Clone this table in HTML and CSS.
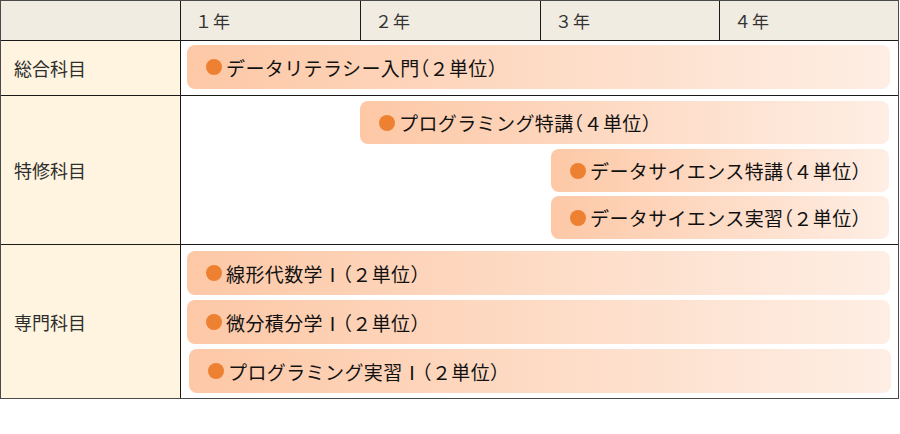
FILE: index.html
```html
<!DOCTYPE html>
<html lang="ja">
<head>
<meta charset="utf-8">
<title>カリキュラム</title>
<link rel="stylesheet" href="styles.css">
</head>
<body>
<div class="table">
  <div class="row head">
    <div class="label"></div>
    <div class="years">
      <div class="year">１年</div>
      <div class="year">２年</div>
      <div class="year">３年</div>
      <div class="year">４年</div>
    </div>
  </div>
  <div class="row r1">
    <div class="label">総合科目</div>
    <div class="courses">
      <div class="bar y1"><span class="dot"></span>データリテラシー入門<span class="unit">（２単位）</span></div>
    </div>
  </div>
  <div class="row r2">
    <div class="label">特修科目</div>
    <div class="courses">
      <div class="bar y2"><span class="dot"></span>プログラミング特講<span class="unit">（４単位）</span></div>
      <div class="bar y3"><span class="dot"></span>データサイエンス特講<span class="unit">（４単位）</span></div>
      <div class="bar y3"><span class="dot"></span>データサイエンス実習<span class="unit">（２単位）</span></div>
    </div>
  </div>
  <div class="row r3">
    <div class="label">専門科目</div>
    <div class="courses">
      <div class="bar y1"><span class="dot"></span>線形代数学Ⅰ<span class="unit">（２単位）</span></div>
      <div class="bar y1"><span class="dot"></span>微分積分学Ⅰ<span class="unit">（２単位）</span></div>
      <div class="bar y1 shift"><span class="dot"></span>プログラミング実習Ⅰ<span class="unit">（２単位）</span></div>
    </div>
  </div>
</div>
</body>
</html>
```
FILE: styles.css
```css
html, body {
  margin: 0;
  padding: 0;
  background: #ffffff;
}
body {
  font-family: "Noto Sans CJK JP", "Noto Sans", sans-serif;
  color: #222;
}
.table {
  width: 899px;
  box-sizing: border-box;
  border: 1px solid #4a4a4a;
}
.row {
  display: grid;
  grid-template-columns: 180px 1fr;
  border-top: 1px solid #1a1a1a;
}
.row.head {
  border-top: none;
  height: 39px;
  background: #f1ece2;
}
.label {
  box-sizing: border-box;
  border-right: 1px solid #1a1a1a;
  background: #fff4df;
  display: flex;
  align-items: center;
  padding-left: 13px;
  font-size: 18px;
  color: #2e2e2e;
}
.head .label {
  background: #f1ece2;
}
.years {
  display: grid;
  grid-template-columns: 180px 180px 179px 1fr;
}
.year {
  box-sizing: border-box;
  border-right: 1px solid #1a1a1a;
  display: flex;
  align-items: center;
  padding-left: 14px;
  font-size: 17px;
  letter-spacing: 1px;
  color: #333;
}
.year:last-child {
  border-right: none;
}
.r1 { height: 54px; }
.r2 { height: 148px; }
.r3 { height: 153px; }
.courses {
  display: grid;
  grid-template-columns: 180px 180px 179px 1fr;
  align-content: start;
  row-gap: 5px;
  padding-top: 5px;
}
.r1 .courses { padding-top: 4px; }
.r3 .courses { padding-top: 6px; row-gap: 5px; }
.r3 .bar { height: 44px; }
.r1 .bar { height: 44px; }
.bar {
  box-sizing: border-box;
  height: 43px;
  border-radius: 8px;
  background: linear-gradient(to right, #fdc8a6, #feeee4);
  display: flex;
  align-items: center;
  padding-left: 19px;
  font-size: 19px;
  letter-spacing: 0.4px;
  color: #111;
  white-space: nowrap;
}
.unit {
  font-feature-settings: "halt";
}
.bar.y1 {
  grid-column: 1 / 5;
  margin-left: 6px;
  margin-right: 8px;
}
.bar.y2 {
  grid-column: 2 / 5;
  margin-left: -1px;
  margin-right: 9px;
}
.bar.y3 {
  grid-column: 3 / 5;
  margin-left: 10px;
  margin-right: 9px;
}
.bar.shift {
  margin-left: 8px;
  margin-right: 7px;
}
.r2 .bar.y3 + .bar.y3 {
  margin-top: -1px;
}
.dot {
  display: inline-block;
  flex: none;
  width: 16px;
  height: 16px;
  border-radius: 50%;
  background: #ee8032;
  margin-right: 4px;
}
```
